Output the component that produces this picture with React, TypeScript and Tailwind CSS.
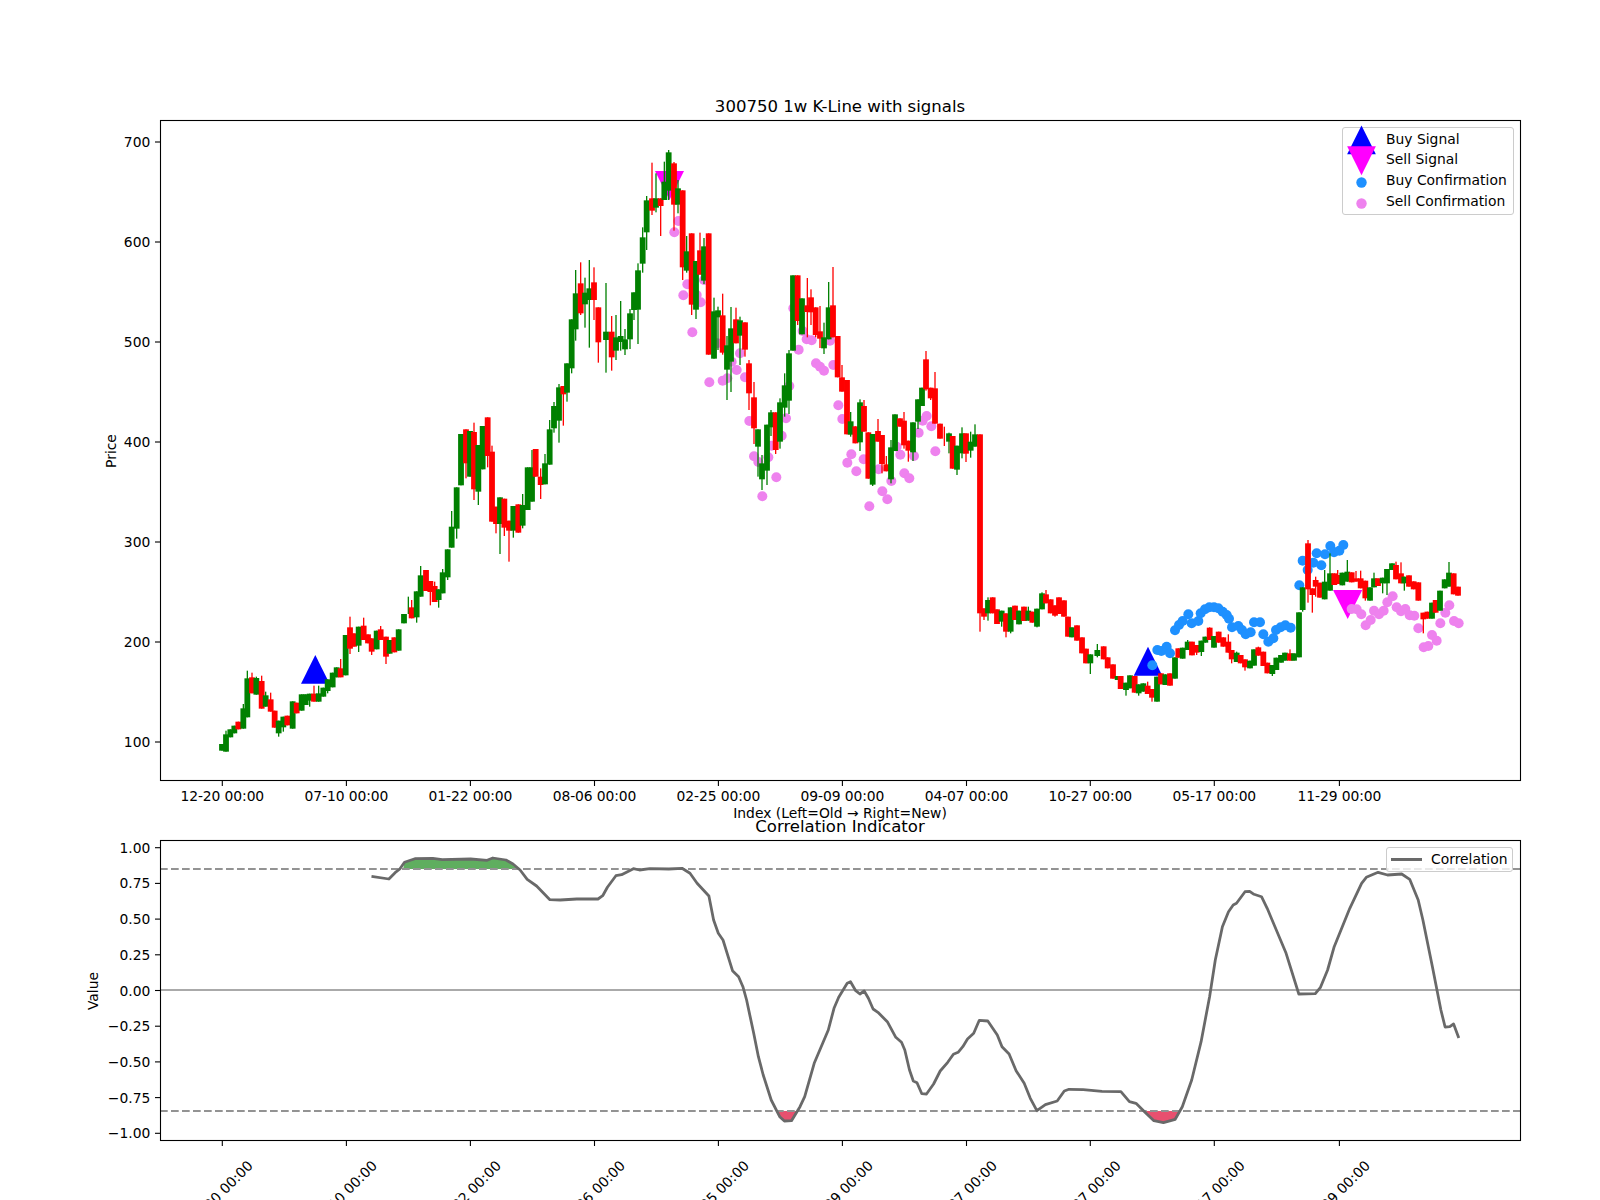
const GREEN = "#008000";
const RED = "#ff0000";

// Candle rows are read off 3x crops: [x, up(0)/down(1), bodyTop, bodyBottom, wickTop?, wickBottom?]
type Row = [number, number, number, number, number?, number?];
type Candle = { x: number; down: number; top: number; bottom: number; wickTop: number; wickBottom: number };

const fromCrop = (ox: number, oy: number, rows: Row[]): Candle[] =>
  rows.map(([x, down, top, bottom, wt, wb]) => ({
    x: ox + x / 3,
    down,
    top: oy + top / 3,
    bottom: oy + bottom / 3,
    wickTop: oy + (wt ?? top) / 3,
    wickBottom: oy + (wb ?? bottom) / 3,
  }));

const dots = (ox: number, oy: number, pts: number[][]) => pts.map(([x, y]) => [ox + x / 3, oy + y / 3]);

const candles: Candle[] = [
  ...fromCrop(150, 450, [
    [216, 0, 882, 902], [228, 0, 853, 905, 842], [241, 0, 838, 862], [253, 0, 827, 850], [265, 1, 815, 838],
    [280, 0, 775, 836, 762], [292, 0, 685, 802, 662], [306, 1, 682, 730, 668], [319, 0, 684, 734, 680], [335, 1, 693, 776, 677],
    [347, 0, 736, 770, 725], [362, 1, 748, 785, 728], [374, 1, 782, 833], [386, 0, 812, 850, 812, 860], [400, 0, 800, 832, 800, 845],
    [412, 1, 797, 826], [428, 0, 754, 836], [440, 1, 758, 790], [455, 0, 733, 782], [467, 0, 733, 765],
    [479, 0, 731, 752, 731, 770], [492, 1, 731, 755, 707], [506, 0, 730, 755, 707], [520, 0, 713, 740], [533, 0, 688, 723, 688, 730],
    [548, 0, 668, 712], [560, 0, 652, 682], [572, 1, 655, 682, 627], [587, 0, 555, 676], [600, 1, 532, 596, 500, 612],
    [612, 1, 550, 590], [626, 0, 530, 587, 530, 606], [641, 1, 527, 570, 503], [654, 1, 553, 580], [665, 1, 565, 605, 565, 615],
    [680, 0, 542, 598], [692, 1, 538, 570, 528], [708, 1, 560, 620, 560, 642], [719, 0, 570, 611], [733, 1, 562, 607],
    [746, 0, 538, 602], [762, 0, 492, 520], [775, 0, 490, 490, 440, 492], [785, 1, 472, 505, 450], [800, 0, 424, 502, 424, 518],
    [812, 0, 376, 440, 348], [828, 1, 360, 423], [841, 1, 393, 426, 393, 466], [854, 1, 408, 456, 395], [866, 0, 418, 450, 418, 473],
    [878, 0, 367, 430, 357], [893, 0, 298, 382, 298, 390], [905, 0, 230, 293, 183], [920, 0, 112, 236, 112, 266], [933, 0, -48, 106],
    [948, 1, -62, 40, -62, 85], [960, 0, -57, 80], [972, 1, -54, 118, -82, 150], [985, 0, -15, 125, -15, 165], [998, 0, -72, 58],
    [1013, 1, -98, 18, -98, 52], [1026, 1, 5, 215, -13], [1038, 1, 170, 222, 170, 250], [1050, 0, 142, 222, 142, 312], [1063, 1, 146, 233, 146, 258],
    [1077, 1, 212, 242, 212, 335], [1090, 0, 168, 242, 168, 263], [1105, 1, 163, 248], [1118, 0, 165, 227, 132, 235], [1133, 0, 52, 180],
    [1146, 0, 52, 155, 0, 155], [1157, 1, -3, 80], [1172, 1, 80, 105, 55, 147], [1185, 0, 40, 103, 12],
  ]),
  ...fromCrop(150, 100, [
    [1199, 0, 988, 1094, 960], [1212, 0, 918, 985, 906, 998], [1227, 0, 862, 962, 852, 1028], [1240, 1, 858, 883, 858, 977], [1251, 0, 790, 878, 790, 905],
    [1265, 0, 658, 805, 658, 820], [1277, 0, 580, 688, 510, 722], [1292, 1, 550, 640, 487, 645], [1305, 0, 578, 613, 533, 683], [1318, 0, 565, 600, 480, 743],
    [1332, 1, 547, 600, 502, 660], [1345, 1, 622, 727, 622, 788], [1368, 0, 695, 720, 549, 818], [1385, 1, 695, 772, 648, 812], [1398, 0, 712, 752, 645, 780],
    [1412, 0, 708, 726, 603, 752], [1425, 0, 718, 748, 687, 765],
  ]),
  ...fromCrop(630, 130, [
    [0, 0, 550, 628, 537, 657], [12, 0, 487, 540, 487, 570], [24, 0, 421, 539, 400, 642], [38, 0, 322, 401, 292, 428], [50, 0, 211, 307, 198, 360],
    [66, 1, 205, 242, 98, 255], [78, 0, 205, 233, 130, 247], [92, 1, 205, 228, 205, 318], [103, 0, 155, 210, 95, 210], [116, 0, 67, 182, 60, 210],
    [132, 1, 100, 224, 96, 302], [144, 0, 175, 224, 150, 250], [158, 1, 181, 412, 181, 450], [170, 0, 364, 422, 318, 428], [185, 1, 310, 524, 310, 555],
    [198, 0, 393, 539, 393, 567], [210, 1, 361, 434, 308], [222, 0, 349, 452, 324, 462], [236, 1, 310, 674], [252, 0, 544, 686, 503],
    [264, 0, 541, 562, 530, 660], [278, 1, 556, 668, 491, 674], [291, 0, 646, 719, 618, 810], [303, 0, 595, 695, 531, 786], [318, 1, 568, 640, 533],
    [330, 0, 571, 617, 560, 705], [345, 1, 577, 659, 577, 680],
  ]),
  ...fromCrop(700, 350, [
    [147, 1, 40, 130, 30, 180], [162, 1, 142, 235, 96, 282], [174, 0, 238, 290, 238, 380], [186, 0, 340, 388, 315, 420], [201, 0, 224, 362, 224, 405],
    [213, 0, 187, 232, 180, 258], [227, 1, 187, 300, 187, 312], [240, 0, 157, 275, 145, 296], [254, 0, 106, 173, 70, 200], [267, 0, 10, 152, 0, 192],
  ]),
  ...fromCrop(630, 130, [
    [489, 0, 436, 662], [503, 1, 436, 573, 436, 585], [516, 0, 505, 613], [532, 1, 526, 546, 444, 622], [543, 1, 502, 547, 478, 585],
    [557, 1, 532, 615, 532, 622], [570, 1, 604, 626, 528, 654], [582, 0, 622, 655, 578, 672], [596, 0, 532, 628, 456], [609, 1, 526, 622, 411],
  ]),
  ...fromCrop(700, 350, [
    [413, 1, -42, 82], [426, 1, 82, 125, 45], [441, 1, 90, 253], [452, 0, 214, 254, 186, 260], [466, 1, 229, 280],
    [480, 0, 157, 277, 148, 303], [492, 1, 168, 245, 150], [505, 1, 247, 386], [518, 0, 252, 404, 252, 408], [534, 1, 243, 275, 207],
    [546, 1, 255, 342, 255, 370], [559, 1, 343, 364, 318], [573, 0, 292, 388, 270, 400], [585, 0, 193, 303], [600, 1, 205, 230],
    [612, 1, 212, 286, 186, 296], [625, 1, 272, 302, 272, 335], [639, 0, 217, 307, 217, 333], [654, 0, 148, 215, 148, 237], [666, 0, 113, 168],
    [678, 1, 28, 118, 3, 122], [692, 1, 113, 145, 113, 150], [705, 1, 115, 221, 66], [720, 1, 221, 266], [733, 1, 255, 255, 230, 288],
    [747, 0, 250, 275, 248, 310], [758, 1, 258, 356], [771, 0, 287, 359, 287, 375], [786, 0, 250, 310, 232, 325], [798, 1, 250, 311, 250, 336],
    [812, 0, 275, 302, 245, 323], [825, 0, 253, 290, 223], [840, 1, 253, 790, 253, 845], [852, 1, 775, 800, 775, 810], [864, 0, 750, 790, 742, 812],
    [878, 1, 742, 790], [891, 1, 778, 822], [905, 0, 782, 815, 782, 830], [918, 1, 790, 845, 790, 862], [932, 0, 772, 845, 772, 850],
    [945, 1, 767, 810], [957, 0, 782, 823], [972, 1, 770, 813], [985, 0, 782, 812, 770], [997, 1, 785, 818],
    [1011, 0, 776, 830, 776, 832], [1026, 0, 730, 778, 727], [1038, 1, 733, 760, 720], [1052, 1, 748, 790], [1065, 1, 766, 797, 766, 800],
    [1077, 1, 742, 792], [1092, 1, 751, 800],
  ]),
  ...fromCrop(1000, 520, [
    [204, 1, 290, 350], [216, 0, 322, 352], [231, 1, 316, 362], [246, 1, 352, 400], [258, 1, 386, 430],
    [271, 0, 403, 430, 403, 462], [292, 0, 390, 408, 372, 412], [311, 1, 379, 418], [323, 1, 412, 445], [339, 1, 433, 476],
    [353, 0, 468, 480], [362, 1, 468, 507], [378, 0, 488, 510, 488, 527], [390, 0, 466, 505], [404, 1, 468, 518],
    [416, 0, 493, 520, 493, 527], [430, 0, 490, 515], [443, 1, 497, 522, 485], [456, 1, 507, 533, 507, 545], [471, 0, 470, 545],
    [483, 1, 460, 493], [496, 0, 463, 495], [510, 1, 460, 497], [525, 0, 412, 476], [535, 1, 385, 413],
    [548, 0, 383, 416], [563, 0, 365, 390, 360], [576, 1, 365, 406], [590, 1, 375, 398, 375, 405], [604, 0, 362, 396, 362, 408],
    [616, 0, 350, 368], [629, 1, 323, 360, 322], [642, 0, 348, 383], [656, 1, 335, 368], [670, 1, 352, 380],
    [685, 1, 365, 398, 343], [695, 1, 390, 418, 390, 430], [710, 0, 398, 426, 395], [722, 1, 405, 430], [735, 1, 418, 442, 418, 452],
    [750, 0, 422, 445], [762, 0, 388, 437], [775, 1, 382, 407, 380], [790, 1, 395, 438], [802, 1, 428, 460],
    [817, 0, 435, 462, 435, 468], [829, 0, 413, 450], [843, 0, 405, 428], [855, 0, 398, 422], [870, 1, 400, 422, 388],
    [882, 0, 400, 422], [897, 0, 277, 412], [908, 0, 202, 270, 202, 275], [924, 1, 70, 208, 60, 248], [937, 1, 205, 225, 205, 278],
    [947, 1, 180, 200, 170, 230], [960, 1, 188, 233], [974, 0, 185, 238, 150], [990, 0, 160, 212, 100], [1003, 1, 160, 195],
    [1013, 1, 165, 192, 150], [1027, 0, 158, 196], [1042, 0, 155, 185, 120], [1055, 1, 157, 187], [1068, 1, 175, 185, 153],
    [1082, 1, 175, 205, 152], [1096, 1, 182, 235, 182, 242], [1110, 0, 202, 242], [1122, 0, 175, 202, 158], [1134, 1, 175, 198],
    [1148, 0, 173, 190, 173, 220], [1161, 0, 147, 190, 147, 225], [1176, 0, 130, 150], [1188, 1, 135, 178, 125], [1203, 1, 160, 190, 127],
    [1213, 0, 170, 190, 170, 212], [1227, 1, 166, 200], [1241, 1, 184, 208], [1255, 1, 187, 242], [1270, 1, 278, 298, 278, 340],
    [1282, 1, 275, 296], [1296, 0, 248, 296], [1307, 1, 240, 278], [1320, 0, 212, 272], [1334, 0, 178, 205],
    [1347, 0, 158, 200, 126], [1361, 1, 160, 223], [1374, 1, 200, 227],
  ]),
];

const buyDots = dots(1000, 520, [
  [457, 436], [472, 390], [484, 393], [500, 380], [510, 400], [525, 331], [537, 315], [548, 303], [565, 283], [575, 310], [595, 303],
  [602, 280], [615, 268], [628, 262], [642, 262], [655, 265], [668, 275], [680, 285], [687, 296], [696, 322], [715, 318], [726, 330],
  [737, 343], [752, 337], [762, 307], [780, 307], [790, 343], [805, 365], [820, 355], [828, 330], [842, 322], [856, 316], [872, 323],
  [898, 196], [908, 122], [923, 150], [940, 128], [950, 100], [964, 136], [975, 103], [991, 78], [1002, 97], [1018, 92], [1030, 75],
]);

const sellDots = [
  ...dots(630, 130, [
    [145, 273], [133, 307], [172, 463], [160, 496], [200, 495], [212, 517], [187, 607], [222, 450], [262, 640], [490, 535], [518, 603],
    [530, 628], [545, 631], [506, 659], [600, 632],
  ]),
  ...dots(700, 350, [
    [28, 97], [68, 92], [82, 85], [110, 60], [135, 82], [95, 35], [120, 10], [148, 213], [258, 205], [268, 108], [245, 257], [215, 287],
    [205, 322], [162, 319], [175, 336], [229, 382], [187, 439], [348, 40], [360, 50], [372, 62], [400, 45], [415, 166], [427, 207],
    [454, 313], [442, 338], [491, 328], [469, 364], [536, 358], [547, 424], [562, 448], [508, 469], [574, 393], [590, 290], [601, 314],
    [642, 318], [613, 370], [628, 385], [656, 248], [668, 212], [680, 198], [694, 229], [706, 304],
  ]),
  ...dots(1000, 520, [
    [1055, 267], [1070, 268], [1084, 283], [1097, 316], [1112, 300], [1122, 272], [1137, 283], [1151, 272], [1162, 247], [1178, 229],
    [1190, 262], [1203, 274], [1216, 267], [1229, 286], [1243, 287], [1255, 325], [1271, 382], [1285, 378], [1296, 345], [1310, 362],
    [1321, 310], [1336, 278], [1348, 256], [1362, 303], [1376, 310],
  ]),
];

// correlation line: the two crops are squeezed horizontally (2.119x) and 3x vertically
const corrLeft = [
  [660, 229], [697, 237], [710, 218], [720, 207], [730, 187], [752, 176], [790, 175], [810, 179], [870, 177], [905, 181], [917, 174],
  [945, 180], [960, 192], [975, 210], [990, 238], [1010, 258], [1038, 299], [1060, 300], [1095, 297], [1140, 297], [1150, 287], [1160, 262],
  [1178, 227], [1190, 224], [1215, 206], [1228, 210], [1250, 206], [1290, 207], [1318, 205], [1335, 220], [1350, 250], [1375, 288],
  [1385, 360], [1395, 400], [1405, 420], [1425, 512], [1438, 530], [1447, 560], [1455, 600], [1470, 700], [1480, 770], [1490, 825],
  [1507, 900], [1525, 950], [1535, 963], [1550, 962],
].map(([x, y]) => [60 + x / 2.119, 800 + y / 3]);

const corrRight = [
  [0, 920], [10, 890], [30, 790], [60, 690], [72, 625], [82, 592], [100, 550], [107, 545], [118, 572], [127, 582], [136, 573], [145, 595],
  [155, 627], [165, 637], [185, 665], [203, 712], [215, 727], [222, 750], [232, 810], [240, 843], [248, 848], [258, 881], [268, 882],
  [283, 852], [297, 813], [313, 787], [325, 763], [335, 757], [345, 740], [355, 717], [368, 700], [380, 661], [398, 663], [418, 705],
  [428, 740], [443, 762], [458, 812], [475, 850], [488, 895], [502, 932], [520, 914], [545, 903], [560, 873], [570, 868], [600, 869],
  [640, 874], [680, 875], [698, 905], [712, 910], [730, 935], [750, 962], [770, 968], [795, 958], [810, 920], [830, 840], [850, 725],
  [868, 590], [880, 480], [895, 380], [908, 335], [918, 315], [925, 310], [943, 275], [953, 274], [962, 283], [978, 290], [990, 325],
  [1030, 460], [1057, 582], [1092, 581], [1103, 562], [1118, 510], [1132, 440], [1165, 325], [1190, 250], [1200, 232], [1225, 217],
  [1245, 225], [1275, 222], [1292, 238], [1310, 300], [1320, 360], [1340, 500], [1358, 630], [1367, 681], [1377, 680], [1385, 672],
  [1396, 714],
].map(([x, y]) => [800 + x / 2.119, 800 + y / 3]);

const toPoints = (pts: number[][]) => pts.map(([x, y]) => `${x.toFixed(1)},${y.toFixed(1)}`).join(" ");

const greenFill = toPoints(
  [[727, 207], [730, 187], [752, 176], [790, 175], [810, 179], [870, 177], [905, 181], [917, 174], [945, 180], [960, 192], [972, 207]].map(
    ([x, y]) => [60 + x / 2.119, 800 + y / 3],
  ),
);
const redFillA = toPoints([[1520, 933], [1525, 950], [1535, 963], [1550, 962], [1562, 933]].map(([x, y]) => [60 + x / 2.119, 800 + y / 3]));
const redFillB = toPoints([[727, 933], [750, 962], [770, 968], [795, 958], [806, 933]].map(([x, y]) => [800 + x / 2.119, 800 + y / 3]));

const xTicks = [
  [222.3, "12-20 00:00"], [346.4, "07-10 00:00"], [470.4, "01-22 00:00"], [594.5, "08-06 00:00"], [718.4, "02-25 00:00"],
  [842.4, "09-09 00:00"], [966.5, "04-07 00:00"], [1090.3, "10-27 00:00"], [1214.3, "05-17 00:00"], [1339.4, "11-29 00:00"],
] as const;

const priceTicks = [700, 600, 500, 400, 300, 200, 100];
const valueTicks = [
  [1, "1.00"], [0.75, "0.75"], [0.5, "0.50"], [0.25, "0.25"], [0, "0.00"], [-0.25, "−0.25"], [-0.5, "−0.50"], [-0.75, "−0.75"], [-1, "−1.00"],
] as const;

const valueY = (v: number) => 990.5 - 142.8 * v;

function PriceChart() {
  return (
    <svg className="block overflow-visible" width={1360} height={660} viewBox="160 120 1360 660" fill="black">
      <polygon points="301,683.7 315.3,655 329.6,683.7" fill="#0000ff" />
      <polygon points="1133.7,675.7 1148,646.7 1162.3,675.7" fill="#0000ff" />
      <polygon points="655,171 684,171 669.5,200" fill="#ff00ff" />
      <polygon points="1333,590 1362.3,590 1347.7,619" fill="#ff00ff" />
      {buyDots.map(([x, y], i) => (
        <circle key={i} cx={x} cy={y} r={5} fill="#1e90ff" />
      ))}
      {sellDots.map(([x, y], i) => (
        <circle key={i} cx={x} cy={y} r={5} fill="#ee82ee" />
      ))}
      {candles.map((c, i) => (
        <g key={i} fill={c.down ? RED : GREEN}>
          <rect x={c.x - 0.65} y={c.wickTop} width={1.3} height={Math.max(c.wickBottom - c.wickTop, 0)} />
          <rect x={c.x - 2.9} y={c.top} width={5.8} height={Math.max(c.bottom - c.top, 0)} />
        </g>
      ))}
      <rect x={160.5} y={120.5} width={1360} height={660} fill="none" stroke="black" strokeWidth={1.1} />
      {priceTicks.map((p) => (
        <g key={p}>
          <line x1={155} x2={160} y1={842 - p} y2={842 - p} stroke="black" strokeWidth={1.1} />
          <text x={150.3} y={847 - p} textAnchor="end">
            {p}
          </text>
        </g>
      ))}
      {xTicks.map(([x, label]) => (
        <g key={label}>
          <line x1={x} x2={x} y1={781} y2={786} stroke="black" strokeWidth={1.1} />
          <text x={x} y={801} textAnchor="middle" letterSpacing={-0.1}>
            {label}
          </text>
        </g>
      ))}
      <text x={116} y={451} textAnchor="middle" transform="rotate(-90 116 451)">
        Price
      </text>
      <text x={840} y={818} textAnchor="middle">
        Index (Left=Old → Right=New)
      </text>
    </svg>
  );
}

function CorrelationChart() {
  return (
    <svg className="block overflow-visible" width={1360} height={300} viewBox="160 840 1360 300" fill="black">
      <text x={840} y={832} textAnchor="middle" fontSize={16.55}>
        Correlation Indicator
      </text>
      <polygon points={greenFill} fill="#5fae5f" />
      <polygon points={redFillA} fill="#e8506f" />
      <polygon points={redFillB} fill="#e8506f" />
      <line x1={160} x2={1520} y1={869} y2={869} stroke="#939393" strokeWidth={2.08} strokeDasharray="7.7 3.3" />
      <line x1={160} x2={1520} y1={1111} y2={1111} stroke="#939393" strokeWidth={2.08} strokeDasharray="7.7 3.3" />
      <line x1={160} x2={1520} y1={990} y2={990} stroke="#aaaaaa" strokeWidth={2.08} />
      <polyline points={toPoints([...corrLeft, ...corrRight])} fill="none" stroke="#696969" strokeWidth={2.78} strokeLinejoin="round" />
      <rect x={160.5} y={840.5} width={1360} height={300} fill="none" stroke="black" strokeWidth={1.1} />
      {valueTicks.map(([v, label]) => (
        <g key={label}>
          <line x1={155} x2={160} y1={valueY(v)} y2={valueY(v)} stroke="black" strokeWidth={1.1} />
          <text x={150.3} y={valueY(v) + 5} textAnchor="end">
            {label}
          </text>
        </g>
      ))}
      {xTicks.map(([x, label]) => (
        <g key={label}>
          <line x1={x} x2={x} y1={1141} y2={1146} stroke="black" strokeWidth={1.1} />
          <text x={x - 2} y={1198} textAnchor="middle" transform={`rotate(-45 ${x - 2} 1193)`}>
            {label}
          </text>
        </g>
      ))}
      <text x={98} y={991} textAnchor="middle" transform="rotate(-90 98 991)">
        Value
      </text>
    </svg>
  );
}

function SignalLegend() {
  const rows = [
    { label: "Buy Signal", icon: <polygon points="0.15,25.25 14.5,-3.45 28.85,25.25" fill="#0000ff" /> },
    { label: "Sell Signal", icon: <polygon points="0.15,-3.65 28.85,-3.65 14.5,25.35" fill="#ff00ff" /> },
    { label: "Buy Confirmation", icon: <circle cx={14.5} cy={11.45} r={5.2} fill="#1e90ff" /> },
    { label: "Sell Confirmation", icon: <circle cx={14.5} cy={11.55} r={5.2} fill="#ee82ee" /> },
  ];
  return (
    <div className="absolute right-[6px] top-[7px] w-[172px] h-[88px] rounded-[3px] border border-[#cccccc] bg-white/80 pl-[4px] pt-[1px]">
      {rows.map((row) => (
        <div key={row.label} className="flex h-[20.9px] items-center gap-[10.5px] leading-none">
          <svg className="shrink-0 overflow-visible" width={28.5} height={20} viewBox="0 0 28.5 20">
            {row.icon}
          </svg>
          <span className="whitespace-nowrap">{row.label}</span>
        </div>
      ))}
    </div>
  );
}

function CorrelationLegend() {
  return (
    <div className="absolute right-[7px] top-[7px] flex h-[25px] w-[127px] items-center gap-[9px] rounded-[3px] border border-[#cccccc] bg-white/80 pl-[4px]">
      <span className="h-[3px] w-[31px] bg-[#696969]" />
      <span className="leading-none">Correlation</span>
    </div>
  );
}

export default function App() {
  return (
    <div className="h-[1200px] w-[1600px] overflow-hidden bg-white pl-[160px] font-['DejaVu_Sans',sans-serif] text-[13.89px] text-black">
      <div className="flex h-[120px] w-[1360px] items-end justify-center pb-[4px] text-[16.55px] leading-none">
        300750 1w K-Line with signals
      </div>
      <div className="relative h-[660px] w-[1360px]">
        <PriceChart />
        <SignalLegend />
      </div>
      <div className="relative mt-[60px] h-[300px] w-[1360px]">
        <CorrelationChart />
        <CorrelationLegend />
      </div>
    </div>
  );
}
